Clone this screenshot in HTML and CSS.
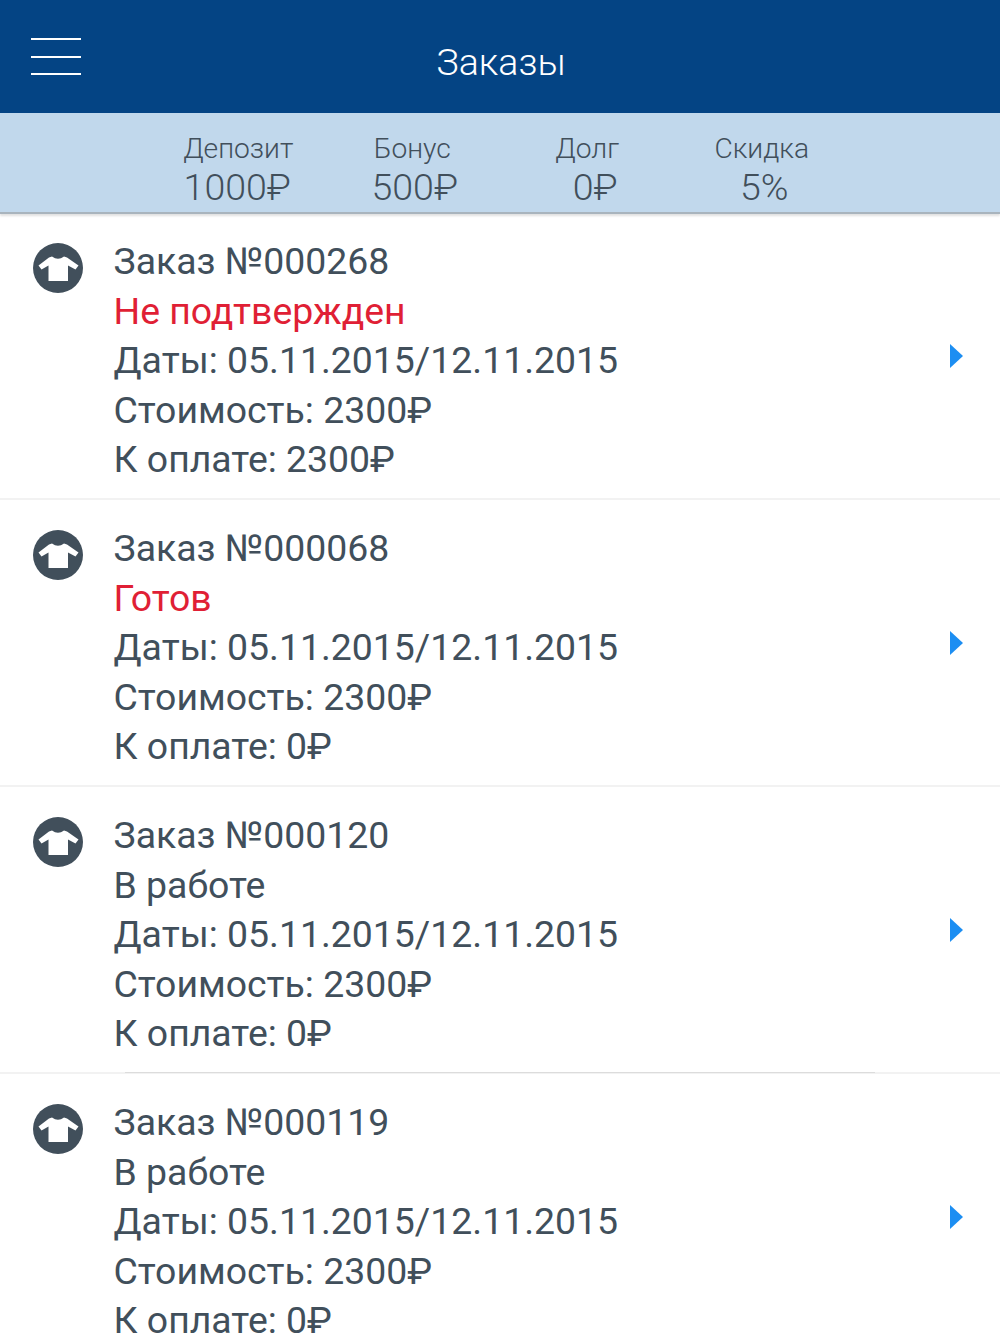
FILE: index.html
```html
<!DOCTYPE html>
<html lang="ru">
<head>
  <meta charset="UTF-8" />
  <meta name="viewport" content="width=device-width, initial-scale=1.0" />
  <title>Заказы</title>
  <link rel="stylesheet" href="styles.css">
</head>
<body>

<svg class="icon-defs" width="0" height="0">
  <symbol id="shirt" viewBox="0 0 50 50">
    <circle cx="25" cy="25" r="25" fill="#414f5b" />
    <path fill="#fff" d="M19 13.500 Q25 18 31 13.500 L34 14.500 L45.500 22.500 L42.500 26.500 L35 22.500 L35 38 L15.500 38 L15.500 22.500 L8.500 26.500 L5.500 22.500 L16 14.500 Z" />
  </symbol>
</svg>

<header class="top-bar">
  <div class="menu-icon"><span></span><span></span><span></span></div>
  <h1>Заказы</h1>
</header>

<div class="summary">
  <div class="summary-item"><div class="label">Депозит</div><div class="value">1000₽</div></div>
  <div class="summary-item item-bonus"><div class="label">Бонус</div><div class="value">500₽</div></div>
  <div class="summary-item item-debt"><div class="label">Долг</div><div class="value">0₽</div></div>
  <div class="summary-item item-discount"><div class="label">Скидка</div><div class="value">5%</div></div>
</div>

<ul class="orders">
  <li class="order">
    <svg class="order-icon"><use href="#shirt" /></svg>
    <div class="order-info">
      <div>Заказ №000268</div>
      <div class="status-alert">Не подтвержден</div>
      <div>Даты: 05.11.2015/12.11.2015</div>
      <div>Стоимость: 2300₽</div>
      <div>К оплате: 2300₽</div>
    </div>
    <div class="arrow"></div>
  </li>
  <li class="order">
    <svg class="order-icon"><use href="#shirt" /></svg>
    <div class="order-info">
      <div>Заказ №000068</div>
      <div class="status-alert">Готов</div>
      <div>Даты: 05.11.2015/12.11.2015</div>
      <div>Стоимость: 2300₽</div>
      <div>К оплате: 0₽</div>
    </div>
    <div class="arrow"></div>
  </li>
  <li class="order order-inset">
    <svg class="order-icon"><use href="#shirt" /></svg>
    <div class="order-info">
      <div>Заказ №000120</div>
      <div>В работе</div>
      <div>Даты: 05.11.2015/12.11.2015</div>
      <div>Стоимость: 2300₽</div>
      <div>К оплате: 0₽</div>
    </div>
    <div class="arrow"></div>
  </li>
  <li class="order">
    <svg class="order-icon"><use href="#shirt" /></svg>
    <div class="order-info">
      <div>Заказ №000119</div>
      <div>В работе</div>
      <div>Даты: 05.11.2015/12.11.2015</div>
      <div>Стоимость: 2300₽</div>
      <div>К оплате: 0₽</div>
    </div>
    <div class="arrow"></div>
  </li>
</ul>

</body>
</html>
```

FILE: styles.css
```css
* { margin: 0; padding: 0; box-sizing: border-box; }

html, body {
  height: 1334px;
  overflow: hidden;
}

body {
  font-family: 'Roboto', sans-serif;
  background: #fff;
  color: #414f5b;
}

.icon-defs {
  display: block;
}

.top-bar {
  height: 113px;
  background: #044484;
  display: flex;
  align-items: center;
  justify-content: center;
  position: relative;
}

.top-bar h1 {
  font-size: 37.5px;
  font-weight: 300;
  color: #fff;
  line-height: 1;
  padding: 12px 0 0 2px;
}

.menu-icon {
  position: absolute;
  top: 38px; left: 31px;
  width: 50px;
  display: flex;
  flex-direction: column;
  gap: 15.500px;
}

.menu-icon span {
  height: 2px;
  background: #fff;
}

.summary {
  height: 99px;
  margin-bottom: 1px;
  background: #c1d8ec;
  box-shadow: 0 2px 0 #a9b4bd, 0 4px 2px rgba(0,0,0,0.12);
  display: grid;
  grid-template-columns: repeat(4, 1fr);
  padding: 17px 151px 0;
  text-align: center;
  font-weight: 300;
  position: relative;
}

.label {
  font-size: 28.2px;
  line-height: 37px;
}

.value {
  font-size: 37.5px;
  line-height: 40px;
  margin-left: -2px;
}

.item-bonus .label { padding-right: 1px; }
.item-bonus .value { padding-left: 6px; }
.item-debt .value { padding-left: 18px; }
.item-discount .value { padding-left: 7px; }

.orders {
  list-style: none;
}

.order {
  height: 287px;
  border-bottom: 2px solid #f2f2f2;
  display: flex;
  align-items: flex-start;
  padding: 23px 37px 0 33px;
  position: relative;
}

.order-inset::after {
  content: "";
  position: absolute;
  left: 125px; right: 125px;
  bottom: -1px;
  height: 1px;
  background: #dcdcdc;
}

.order-icon {
  width: 50px;
  height: 50px;
  margin-top: 7px;
  flex-shrink: 0;
}

.order-info {
  margin-left: 30.5px;
  padding-top: 1.4px;
  flex: 1;
  font-size: 37.4px;
  line-height: 49.4px;
}

.status-alert {
  color: #e01f35;
}

.arrow {
  width: 0;
  height: 0;
  margin-top: 107.5px;
  border-left: 13px solid #1c8ef2;
  border-top: 12px solid transparent;
  border-bottom: 12px solid transparent;
}
```
